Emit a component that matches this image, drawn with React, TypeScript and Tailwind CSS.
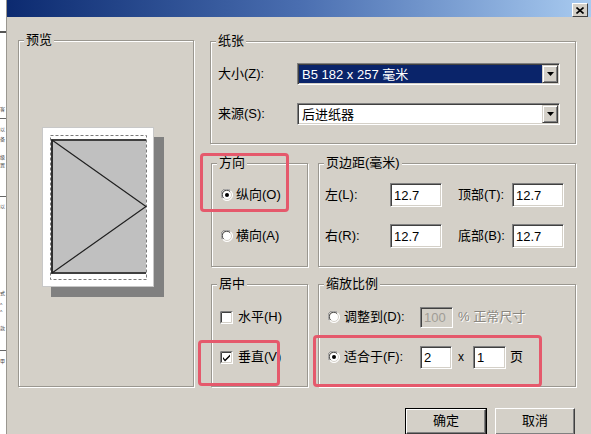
import React from "react";

const FONT = "'Liberation Sans', 'Noto Sans CJK SC', sans-serif";

function Group({ label, className, children }: { label: string; className: string; children?: React.ReactNode }) {
  return (
    <div className={`relative border border-[#9a9790] shadow-[inset_1px_1px_0_#ffffff,1px_1px_0_#ffffff] ${className}`}>
      <span className="absolute -top-[9px] left-[5px] px-[2px] bg-[#d4d0c8] leading-[16px] text-[13px] text-black">{label}</span>
      {children}
    </div>
  );
}

function Sunken({ className, children }: { className: string; children?: React.ReactNode }) {
  return (
    <div
      className={`flex items-center border border-t-[#808080] border-l-[#808080] border-b-white border-r-white shadow-[inset_1px_1px_0_#404040,inset_-1px_-1px_0_#d4d0c8] ${className}`}
    >
      {children}
    </div>
  );
}

function Combo({ text, selected }: { text: string; selected?: boolean }) {
  return (
    <Sunken className="flex-1 h-[22px] bg-white p-[1px] items-stretch">
      <div className={`flex-1 flex items-center pl-[3px] text-[13px] leading-none ${selected ? "bg-[#0a246a] text-white" : "bg-white text-black"}`}>
        {text}
      </div>
      <div className="w-[16px] flex items-center justify-center bg-[#d4d0c8] border border-t-[#d4d0c8] border-l-[#d4d0c8] border-b-[#404040] border-r-[#404040] shadow-[inset_1px_1px_0_#ffffff,inset_-1px_-1px_0_#808080]">
        <svg width="7" height="4" viewBox="0 0 7 4">
          <path d="M0 0 H7 L3.5 4 Z" fill="#000" />
        </svg>
      </div>
    </Sunken>
  );
}

function Field({ value, w, h = "h-[24px]", disabled }: { value: string; w: string; h?: string; disabled?: boolean }) {
  return (
    <Sunken className={`${w} ${h} ${disabled ? "bg-[#d4d0c8] text-[#a09d96]" : "bg-white text-black"} pl-[3px] text-[13px] leading-none`}>
      {value}
    </Sunken>
  );
}

function Radio({ checked }: { checked?: boolean }) {
  return (
    <svg width="12" height="12" viewBox="0 0 12 12" className="shrink-0">
      <circle cx="6" cy="6" r="5.5" fill="#ffffff" stroke="#ffffff" />
      <circle cx="6" cy="6" r="4.5" fill="#ffffff" stroke="#d4d0c8" />
      <path d="M2.1 9.9 A5.5 5.5 0 0 1 9.9 2.1" stroke="#808080" fill="none" transform="translate(-0.6 -0.6)" />
      <path d="M2.8 9.2 A4.5 4.5 0 0 1 9.2 2.8" stroke="#404040" fill="none" transform="translate(-0.3 -0.3)" />
      {checked && <circle cx="6" cy="6" r="2" fill="#000" />}
    </svg>
  );
}

function Check({ checked }: { checked?: boolean }) {
  return (
    <svg width="13" height="13" viewBox="0 0 13 13" className="shrink-0">
      <rect x="0" y="0" width="13" height="13" fill="#ffffff" />
      <path d="M0.5 12.5 V0.5 H12.5" stroke="#808080" fill="none" />
      <path d="M1.5 11.5 V1.5 H11.5" stroke="#404040" fill="none" />
      <path d="M1.5 11.5 H11.5 V1.5" stroke="#d4d0c8" fill="none" />
      {checked && <path d="M3 6 L5 8.5 L10 3.5 V5.5 L5 10.5 L3 8 Z" fill="#000" />}
    </svg>
  );
}

function PagePreview() {
  return (
    <svg width="124" height="172" viewBox="0 0 124 172">
      <rect x="9" y="10" width="113" height="160" fill="#808080" />
      <rect x="0.5" y="0.5" width="111" height="159" fill="#ffffff" stroke="#c8c8c8" />
      <rect x="8.5" y="8.5" width="96" height="144" fill="none" stroke="#7a7a7a" strokeDasharray="3 2" />
      <rect x="9" y="13" width="95" height="133" fill="#c0c0c0" />
      <line x1="9" y1="13" x2="104" y2="13" stroke="#404040" strokeWidth="2" />
      <line x1="9" y1="146" x2="104" y2="146" stroke="#404040" strokeWidth="2" />
      <line x1="10" y1="13" x2="10" y2="146" stroke="#303030" strokeWidth="2" />
      <polyline points="10,13 104,79.5 10,146" fill="none" stroke="#202020" strokeWidth="1.2" />
    </svg>
  );
}

function Button({ label, isDefault }: { label: string; isDefault?: boolean }) {
  return (
    <div className={`${isDefault ? "w-[82px] border border-black" : "w-[80px]"} h-[27px] flex`}>
      <div className="flex-1 flex items-center justify-center bg-[#d4d0c8] border border-t-white border-l-white border-b-[#404040] border-r-[#404040] shadow-[inset_-1px_-1px_0_#808080] text-[13px] text-black leading-none pb-[2px]">
        {label}
      </div>
    </div>
  );
}

export default function App() {
  return (
    <div className="relative w-[591px] h-[434px] overflow-hidden flex bg-[#d4d0c8]" style={{ fontFamily: FONT }}>
      {/* background window edge */}
      <div className="w-[6px] bg-white flex flex-col items-start overflow-hidden text-[5px] leading-none text-[#444]">
        <div className="mt-[31px] h-[2px] w-full bg-[#555]" />
        <span className="mt-[74px]">客</span>
        <span className="mt-[6px] h-[1px] w-full bg-[#666]" />
        <span className="mt-[8px]">以</span>
        <span className="mt-[5px]">备</span>
        <span className="mt-[13px]">级</span>
        <span className="mt-[3px]">置</span>
        <span className="mt-[28px] h-[1px] w-full bg-[#666]" />
        <span className="mt-[7px]">以</span>
        <span className="mt-[82px]">式</span>
        <span className="mt-[7px]">^</span>
        <span className="mt-[2px]">^</span>
        <span className="mt-[11px]">款</span>
        <span className="mt-[19px] h-[1px] w-full bg-[#666]" />
        <span className="mt-[8px]">甲</span>
      </div>

      {/* dialog */}
      <div className="flex-1 flex flex-col border-l border-[#9a9790]">
        <div className="h-[18px] bg-gradient-to-r from-[#0c2a70] via-[#4a6eb0] to-[#a9cbf0] flex justify-end items-start pt-[3px] pr-[3px]">
          <div className="w-[16px] h-[14px] flex items-center justify-center bg-[#d4d0c8] border border-t-white border-l-white border-b-[#404040] border-r-[#404040]">
            <svg width="8" height="7" viewBox="0 0 8 7">
              <path d="M0.5 0.5 L7.5 6.5 M7.5 0.5 L0.5 6.5" stroke="#000" strokeWidth="1.6" />
            </svg>
          </div>
        </div>

        <div className="flex pl-[11px] pt-[23px]">
          <Group label="预览" className="w-[176px] h-[347px]">
            <div className="pl-[23px] pt-[86px]">
              <PagePreview />
            </div>
          </Group>

          <div className="ml-[16px] mt-[1px] w-[366px] flex flex-col">
            <Group label="纸张" className="h-[103px]">
              <div className="flex flex-col pt-[21px] pl-[7px] pr-[15px] gap-[18px] text-[13px]">
                <div className="flex items-center h-[22px]">
                  <span className="w-[79px]">大小(Z):</span>
                  <Combo text="B5 182 x 257 毫米" selected />
                </div>
                <div className="flex items-center h-[22px]">
                  <span className="w-[79px]">来源(S):</span>
                  <Combo text="后进纸器" />
                </div>
              </div>
            </Group>

            <div className="mt-[19px] flex gap-[10px] h-[104px]">
              <Group label="方向" className="w-[97px] ml-[1px]">
                <div className="flex flex-col pt-[19px] pl-[9px] gap-[17px] text-[13px]">
                  <div className="flex items-center h-[24px] gap-[3px]">
                    <Radio checked />
                    <span>纵向(O)</span>
                  </div>
                  <div className="flex items-center h-[24px] gap-[3px]">
                    <Radio />
                    <span>横向(A)</span>
                  </div>
                </div>
              </Group>
              <Group label="页边距(毫米)" className="flex-1">
                <div className="flex flex-col pt-[19px] pl-[6px] gap-[17px] text-[13px]">
                  <div className="flex items-center h-[24px]">
                    <span className="w-[65px]">左(L):</span>
                    <Field value="12.7" w="w-[52px]" />
                    <span className="ml-[16px] w-[54px]">顶部(T):</span>
                    <Field value="12.7" w="w-[52px]" />
                  </div>
                  <div className="flex items-center h-[24px]">
                    <span className="w-[65px]">右(R):</span>
                    <Field value="12.7" w="w-[52px]" />
                    <span className="ml-[16px] w-[54px]">底部(B):</span>
                    <Field value="12.7" w="w-[52px]" />
                  </div>
                </div>
              </Group>
            </div>

            <div className="mt-[17px] flex gap-[10px] h-[103px]">
              <Group label="居中" className="w-[97px] ml-[1px]">
                <div className="flex flex-col pt-[20px] pl-[8px] gap-[16px] text-[13px]">
                  <div className="flex items-center h-[24px] gap-[5px]">
                    <Check />
                    <span>水平(H)</span>
                  </div>
                  <div className="flex items-center h-[24px] gap-[5px]">
                    <Check checked />
                    <span>垂直(V)</span>
                  </div>
                </div>
              </Group>
              <Group label="缩放比例" className="flex-1">
                <div className="flex flex-col pt-[20px] pl-[9px] gap-[16px] text-[13px]">
                  <div className="flex items-center h-[24px]">
                    <Radio />
                    <span className="ml-[4px] w-[76px]">调整到(D):</span>
                    <Field value="100" w="w-[33px]" h="h-[21px]" disabled />
                    <span className="ml-[5px] text-[#8a8780] [text-shadow:1px_1px_0_#ffffff]">% 正常尺寸</span>
                  </div>
                  <div className="flex items-center h-[24px]">
                    <Radio checked />
                    <span className="ml-[4px] w-[76px]">适合于(F):</span>
                    <Field value="2" w="w-[32px]" h="h-[23px]" />
                    <span className="ml-[6px] w-[15px] text-[12px]">x</span>
                    <Field value="1" w="w-[33px]" h="h-[23px]" />
                    <span className="ml-[4px]">页</span>
                  </div>
                </div>
              </Group>
            </div>
          </div>
        </div>

        <div className="flex justify-end gap-[8px] pr-[16px] mt-[21px]">
          <Button label="确定" isDefault />
          <Button label="取消" />
        </div>
      </div>

      {/* red highlight annotations */}
      <div className="absolute left-[200px] top-[153px] w-[89px] h-[59px] border-[3px] border-[#e5596c] rounded-[4px]" />
      <div className="absolute left-[198px] top-[340px] w-[82px] h-[46px] border-[3px] border-[#e5596c] rounded-[4px]" />
      <div className="absolute left-[313px] top-[335px] w-[229px] h-[52px] border-[3px] border-[#e5596c] rounded-[4px]" />
    </div>
  );
}
